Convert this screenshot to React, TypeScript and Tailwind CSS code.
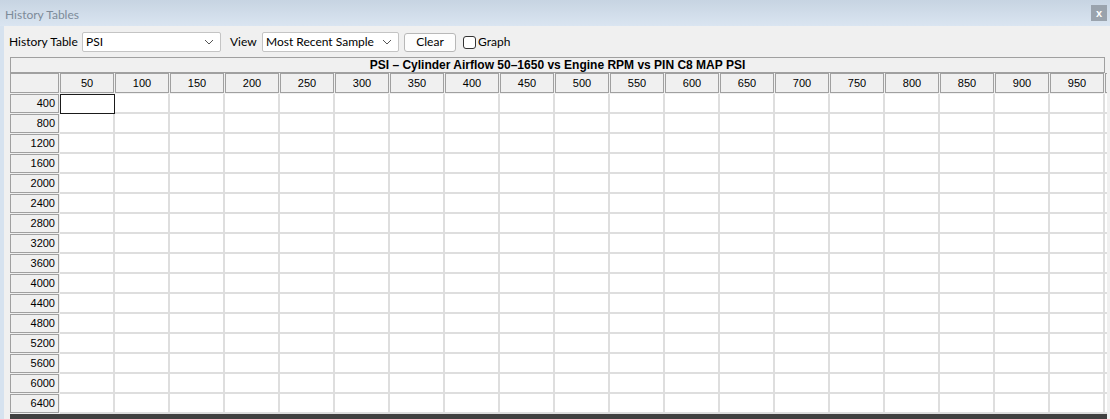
import React from 'react'

const COLS = [50, 100, 150, 200, 250, 300, 350, 400, 450, 500, 550, 600, 650, 700, 750, 800, 850, 900, 950]
const ROWS = [400, 800, 1200, 1600, 2000, 2400, 2800, 3200, 3600, 4000, 4400, 4800, 5200, 5600, 6000, 6400]

const ui = { fontFamily: 'Lato, "Noto Sans", sans-serif' }
const grid = { fontFamily: '"Liberation Sans", Arial, sans-serif' }

function Chevron() {
  return (
    <svg width="10" height="6" viewBox="0 0 10 6" className="shrink-0">
      <polyline points="1,1 5,5 9,1" fill="none" stroke="#555" strokeWidth="1" />
    </svg>
  )
}

function Select({ value, width }: { value: string; width: string }) {
  return (
    <div className={`flex h-[20px] ${width} shrink-0 items-center justify-between rounded-[2px] border border-[#c4c4c4] bg-white pl-[3px] pr-[6px] text-[12px] text-black`}>
      <span>{value}</span>
      <Chevron />
    </div>
  )
}

export default function App() {
  return (
    <div className="flex h-[419px] w-[1110px] flex-col overflow-hidden bg-[#f0f0f0]">
      {/* title bar */}
      <div
        className="flex h-[26px] shrink-0 items-center justify-between bg-gradient-to-b from-[#c7d4e2] to-[#dae5f1] pl-[5px] pr-[3px]"
        style={ui}
      >
        <span className="pt-[3px] text-[12px] text-[#7d8b99]">History Tables</span>
        <div className="flex h-[16px] w-[16px] items-center justify-center bg-[#9aa3ad] text-[11px] font-bold leading-none text-white" style={grid}>x</div>
      </div>

      <div className="flex min-h-0 flex-1 border-l-[4px] border-[#d6e2ef]">
        <div className="flex min-w-0 flex-1 flex-col">
          {/* toolbar */}
          <div className="flex h-[31px] shrink-0 items-center pl-[5px] pt-[1px] text-[12px]" style={ui}>
            <span className="w-[73px] shrink-0">History Table</span>
            <Select value="PSI" width="w-[139px]" />
            <span className="ml-[9px] w-[32px] shrink-0">View</span>
            <Select value="Most Recent Sample" width="w-[137px]" />
            <button className="ml-[5px] h-[19px] w-[52px] shrink-0 rounded-[3px] border border-[#b8b8b8] bg-[#fdfdfd] text-[12px] leading-none">Clear</button>
            <span className="ml-[7px] h-[13px] w-[13px] shrink-0 rounded-[3px] border border-[#333] bg-white" />
            <span className="ml-[2px]">Graph</span>
          </div>

          {/* grid */}
          <div className="ml-[6px] flex w-[1097px] shrink-0 flex-col overflow-hidden text-[11px] text-black" style={grid}>
            <div className="flex h-[16px] w-[1095px] shrink-0 items-center justify-center border border-[#a0a0a0] bg-[#f0f0f0] text-[12px] font-bold">
              PSI – Cylinder Airflow 50–1650 vs Engine RPM vs PIN C8 MAP PSI
            </div>
            <div className="flex h-[21px] shrink-0 gap-px pb-px">
              <div className="w-[49px] shrink-0 border border-[#a0a0a0] bg-[#f0f0f0]" />
              {COLS.map(c => (
                <div key={c} className="flex w-[54px] shrink-0 items-center justify-center border border-[#a0a0a0] bg-[#f0f0f0]">{c}</div>
              ))}
              <div className="w-[54px] shrink-0 border border-[#a0a0a0] bg-[#f0f0f0]" />
            </div>
            {ROWS.map((r, i) => (
              <div key={r} className="flex h-[20px] shrink-0">
                <div className="mr-px mb-px flex w-[49px] shrink-0 items-center justify-end border border-[#a0a0a0] bg-[#f0f0f0] pr-[3px]">{r}</div>
                {[...COLS, 1000].map((c, j) => (
                  <div
                    key={c}
                    className={`h-[20px] w-[55px] shrink-0 bg-white ${
                      i === 0 && j === 0 ? 'border border-[#1a1a1a]' : 'border-b-2 border-r-2 border-[#dedede]'
                    }`}
                  />
                ))}
              </div>
            ))}
            <div className="h-[8px] w-[1097px] shrink-0 bg-[#404040]" />
          </div>
        </div>
      </div>
    </div>
  )
}
